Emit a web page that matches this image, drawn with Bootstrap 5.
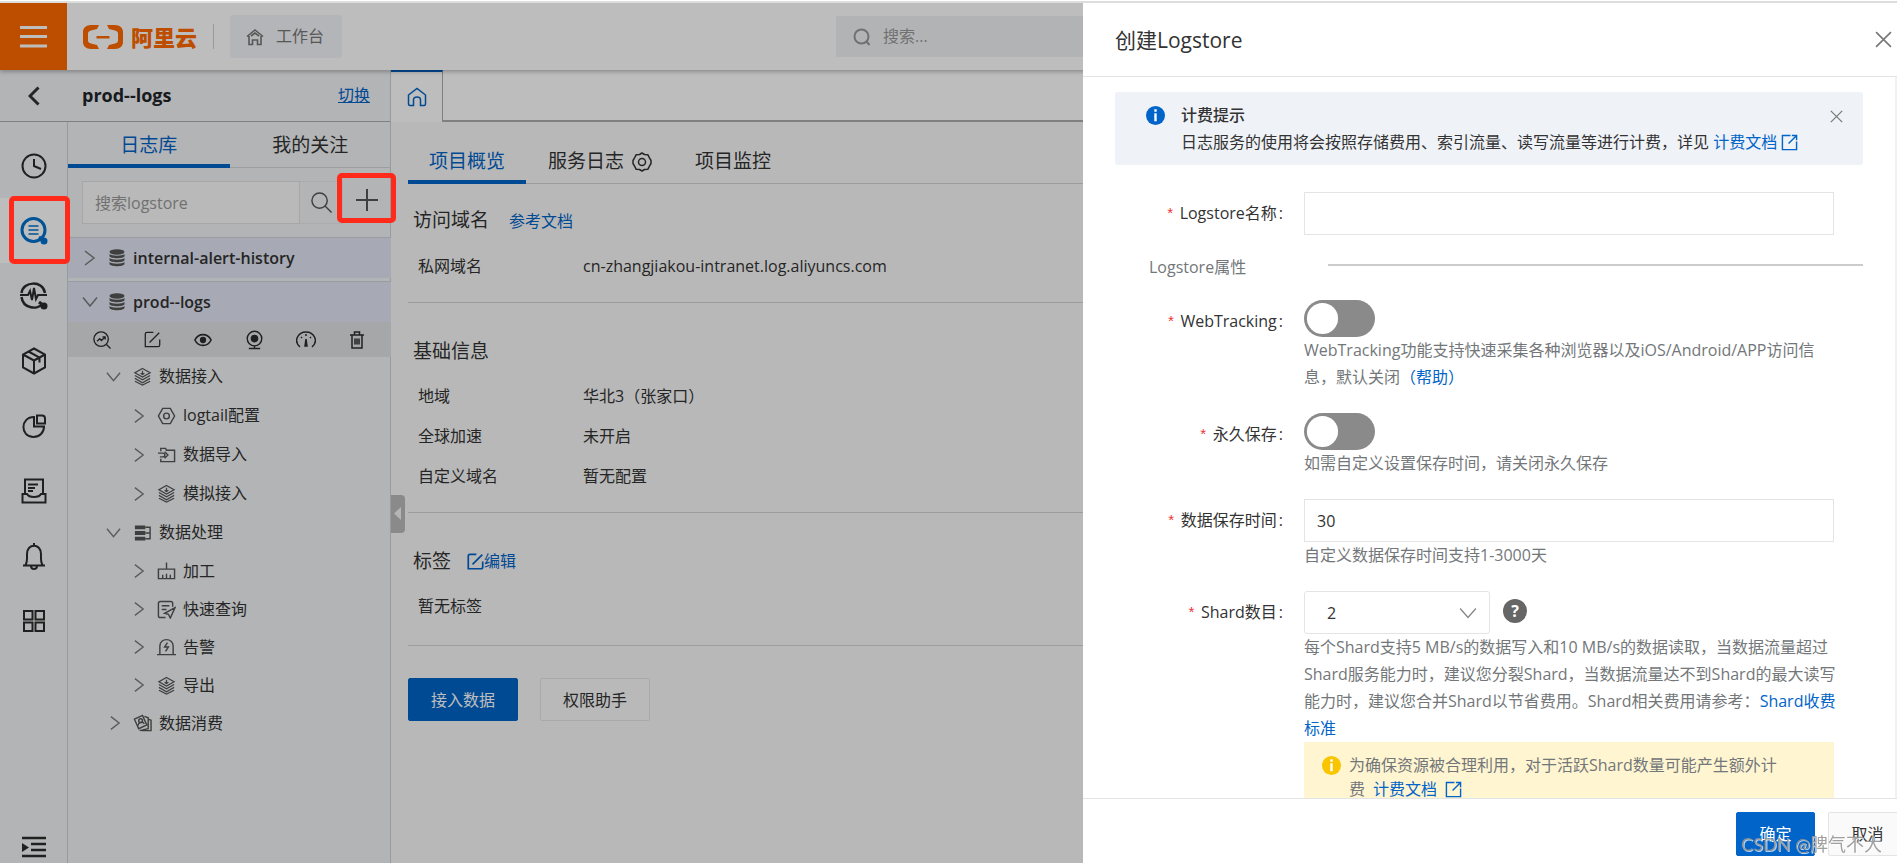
<!DOCTYPE html>
<html lang="zh-CN">
<head>
<meta charset="utf-8">
<meta name="viewport" content="width=device-width, initial-scale=1">
<title>日志服务 - 创建Logstore</title>
<link rel="stylesheet" href="https://cdn.jsdelivr.net/npm/bootstrap@5.3.0/dist/css/bootstrap.min.css">
<style>
:root{--brand:#0064c8;--ink:#333;--line:#d4d4d4}
body{font-family:"Open Sans","Noto Sans CJK SC",sans-serif;font-size:16px;line-height:27px;color:var(--ink);background:#f9f9f9}
a{color:var(--brand);text-decoration:none}
.ico{fill:none;stroke:currentColor;stroke-width:1.5;flex:none;display:block}
.btn-plain{border:0;background:none;padding:0;color:inherit;line-height:1}
.edge-strip{height:3px;background:linear-gradient(#fff 1px,#dcdedd 1px);position:relative;z-index:1080}
.t-19{font-size:19px}

/* top bar */
.topbar{height:67px;background:#fff;box-shadow:0 2px 4px rgba(0,0,0,.25);position:relative;z-index:2}
.menu-btn{width:67px;background:#ff6a00;color:#fff;border:0}
.brand-name{font-size:22px;font-weight:900;color:#ff6a00;line-height:24px}
.rule{width:1px;height:25px;background:#d0d0d0}
.bench-btn{height:43px;padding:0 18px 0 16px;background:#f2f4f8;border:0;border-radius:3px;color:#777}
.top-search{height:41px;background:#f0f2f5;color:#999;padding-left:17px;width:416px;gap:12px;margin-left:auto;margin-right:34%}
.top-search input,.tree-search input{border:0;background:none;outline:0;color:inherit;min-width:0}
.top-search input{padding:0}
.top-search input::placeholder,.tree-search input::placeholder{color:#999;opacity:1}

/* project header */
.project-bar{height:52px;background:#f2f3f5;border-bottom:1px solid #adadad}
.sidebar{width:391px;background:#f2f3f5;border-right:1px solid #ccd2d8}
.project-name{font-size:18px;font-weight:700;margin-left:42px}
.rail{width:68px;border-right:1px solid #ccd2d8;padding-top:11px;color:#2c2c2c}
.rail a{height:65px;color:inherit;position:relative}
.rail a.active{background:#fff;color:#0070cc}
.mark-box{position:absolute;border:5px solid #ff2a1a;border-radius:5px;z-index:1090;pointer-events:none}
.mark-rail{left:9px;right:-3px;top:-2px;bottom:-1px}
.mark-add{inset:-8px -5px 1px -6px}
.side-tabs{height:46px;border-bottom:1px solid #d4d6d9}
.side-tabs a{color:var(--ink);height:46px;padding-top:10px;border-bottom:4px solid transparent}
.side-tabs a.active,.main-tabs a.active{color:var(--brand);border-bottom-color:var(--brand);border-radius:3px 3px 0 0}
.tree-search{height:43px;margin:13px 0 13px 14px}
.tree-search .query{width:218px;background:#fafafa;border:1px solid #e2e2e2;padding:1px 0 0 10px}
.tree-search .go{width:43px;border:1px solid #e8e9eb;border-left:0;color:#555}
.tree-search .add{width:48px;color:#555;position:relative;padding-bottom:5px}
.store{height:41px;background:#e2e6f3;border-top:1px solid #d0d3da;font-weight:600;padding-left:16px}
.store svg:nth-child(2){margin:0 8px 0 13px}
.store+.store{margin-top:3px}
.store-tools{height:35px;background:#e1e2e5;padding:0 26px 0 25px;color:#2c2c2c}
.tree a{display:flex;align-items:center;height:39px;color:var(--ink);padding-left:38px}
.tree .sub{padding-left:62px}
.tree .tight{height:38px}
.tree a svg{color:#555}
.chev{stroke:#7b7b7b!important;margin-right:12px}
.tree .pic{margin-right:7px}

/* main area */
.home-tab{width:52px;height:52px;background:#fff;border-top:2px solid var(--brand);border-right:1px solid #adadad;color:var(--brand);margin-bottom:-2px}
.page-tabs{height:52px;background:#fff;border-bottom:2px solid #adadad}
.main-tabs{height:62px;border-bottom:1px solid var(--line)}
.main-tabs a{padding:26px 21px 0;height:62px;color:var(--ink);border-bottom:4px solid transparent}
.main-tabs a+a{margin-left:1px}
.main-pad{padding-left:17px}
.info{border-bottom:1px solid var(--line);padding:33px 0 16px}
.info:first-of-type{padding-top:21px}
.info:last-of-type{padding-bottom:19px}
.info h2{font-size:19px;font-weight:400;line-height:30px;margin:0 0 10px 5px}
.info dl{margin:0 0 0 10px;line-height:40px}
.info dt{width:165px;font-weight:400}
.info dd{margin:0}
.act{height:43px;padding:0 22px;font-size:16px;border-radius:2px}
.act-main{background:var(--brand);color:#fff;border:1px solid var(--brand)}
.act-alt{background:#fafafa;color:var(--ink);border:1px solid #e3e4e6}
.acts{gap:22px}
.fold{position:absolute;left:0;top:425px;width:14px;height:38px;background:#bbb;border-radius:0 4px 4px 0;color:#f4f4f4}

/* drawer */
.offcanvas-backdrop.show{opacity:1;background:rgba(0,0,0,.26)}
.offcanvas.drawer{top:3px;width:814px;border:0;transition:none;color:var(--ink);overflow:hidden}
.drawer-head{height:74px;border-bottom:1px solid #e3e4e6;padding:0 5px 0 32px}
.drawer-head h1{font-size:21px;font-weight:400;margin:2px 0 0}
.drawer .offcanvas-body{padding:15px 32px 0;overflow:hidden;border-right:2px solid #f1f1f1}
.notice{background:#eff2f7;border-radius:3px;height:73px;padding:10px 20px 0 31px;margin-bottom:27px}
.notice strong{font-weight:500}
.f-row{display:grid;grid-template-columns:168px 530px;column-gap:21px;margin-bottom:22px}
.f-row>label{text-align:right;height:43px;line-height:43px}
.f-row .req::before{content:"*";color:#e33;font-family:"Liberation Mono",monospace;font-size:15px;margin-right:5px}
.f-row .req::after{content:":";margin-left:2px}
.drawer .form-control,.drawer .form-select{height:43px;border:1px solid #e3e4e6;border-radius:0;font-size:16px;color:var(--ink);padding:0 12px}
.drawer .form-select{width:186px;border-radius:3px;padding-left:22px;background-size:18px 18px;background-image:url("data:image/svg+xml,%3Csvg xmlns='http://www.w3.org/2000/svg' viewBox='0 0 16 16'%3E%3Cpath fill='none' stroke='%23888' stroke-width='1.2' d='M1 4l7 8 7-8'/%3E%3C/svg%3E")}
.tip{color:#73777a}
.tip-wide{margin-right:-7px}
.form-switch.sw{padding:0;margin:0;min-height:37px}
.sw .form-check-input{width:71px;height:37px;margin:0;float:none;display:block;border:0;background-color:#8a8a8a;background-image:url("data:image/svg+xml,%3Csvg xmlns='http://www.w3.org/2000/svg' viewBox='-19 -19 38 38'%3E%3Ccircle r='16' fill='%23fff'/%3E%3C/svg%3E")!important}
.group-head{margin:-3px 0 19px 34px;color:#73777a;height:27px}
.group-head span{width:179px}
.group-head i{height:2px;background:#ccc;margin-bottom:5px}
.help-dot{width:24px;height:24px;border-radius:50%;background:#666;color:#fff;border:0;font-size:16px;font-weight:700;line-height:24px;padding:0;margin:0 0 4px 13px}
.warn{background:#fff5d1;padding:11px 48px 11px 18px;line-height:24px}
.drawer-foot{height:65px;border-top:1px solid #e3e4e6;background:#fff;padding-top:13px;gap:13px}
.drawer-foot .act{height:44px;width:79px;flex:none}
.drawer-foot .act:last-child{margin-right:-10px}
.stamp{position:fixed;right:15px;bottom:6px;font-size:18px;line-height:26px;font-family:Lato,"Noto Sans CJK SC",sans-serif;color:rgba(150,150,150,.9);text-shadow:1px 1px 0 rgba(255,255,255,.7);z-index:1095;pointer-events:none}
</style>
</head>
<body class="vh-100 overflow-hidden d-flex flex-column">
<svg width="0" height="0" class="position-absolute" aria-hidden="true">
  <symbol id="i-right" viewBox="0 0 12 16"><path d="M1 1l9 7-9 7"/></symbol>
  <symbol id="i-down" viewBox="0 0 16 12"><path d="M1 1.500l7 8.500 7-8.500"/></symbol>
  <symbol id="i-search" viewBox="0 0 24 24"><circle cx="10" cy="10" r="8"/><path d="M16 16l6.500 6.500"/></symbol>
  <symbol id="i-x" viewBox="0 0 16 16"><path d="M1 1l14 14M15 1L1 15"/></symbol>
  <symbol id="i-layers" viewBox="0 0 20 20"><path d="M10 1.500l8 4.500-8 4.500L2 6zM2 9l8 4.500L18 9M2 12l8 4.500 8-4.500M2 15l8 4 8-4M10 4v4M8 6.500l2 1.500 2-1.500" stroke-width="1.300"/></symbol>
  <symbol id="i-db" viewBox="0 0 16 18"><g fill="currentColor" stroke="none"><ellipse cx="8" cy="3" rx="7.500" ry="2.700"/><path d="M.5 5c2 2.300 13 2.300 15 0v2.300c-1 2.600-14 2.600-15 0zM.5 9c2 2.300 13 2.300 15 0v2.300c-1 2.600-14 2.600-15 0zM.5 13c2 2.300 13 2.300 15 0v2c-1 3-14 3-15 0z"/></g></symbol>
  <symbol id="i-edit" viewBox="0 0 20 20"><path d="M11 1.500H3.500c-1.300 0-2 .7-2 2v15h15c1.300 0 2-.7 2-2V10M6.500 13.500L18 2"/></symbol>
  <symbol id="i-out" viewBox="0 0 18 18"><path d="M10 1.500H1.500v15h15V8M8 10l8-8M11.500 1.500h5v5"/></symbol>
  <symbol id="i-info" viewBox="0 0 20 20"><circle cx="10" cy="10" r="10" fill="currentColor" stroke="none"/><path d="M10 3.500v2.500M10 7.500V16" stroke="#fff" stroke-width="2.500"/></symbol>
</svg>

<div class="edge-strip"></div>

<header class="topbar d-flex align-items-center flex-shrink-0">
  <button class="menu-btn h-100 d-flex align-items-center justify-content-center" aria-label="菜单">
    <svg class="ico" width="27" height="22" style="stroke-width:3"><path d="M0 1.500h27M0 10.500h27M0 20h27"/></svg>
  </button>
  <a href="#" class="d-flex align-items-center ms-3" aria-label="阿里云">
    <svg class="ico" width="40" height="26" viewBox="0 0 40 26" style="color:#ff6a00"><path d="M16 1H8C3 1 0 4 0 8v10c0 4 3 7 8 7h8l-2-4-6-1.500c-2-.5-3-1.500-3-3v-7c0-1.500 1-2.500 3-3L14 5zM24 1h8c5 0 8 3 8 7v10c0 4-3 7-8 7h-8l2-4 6-1.500c2-.5 3-1.500 3-3v-7c0-1.500-1-2.500-3-3L26 5zM13.500 12h13v2.500h-13z" fill="currentColor" stroke="none"/></svg>
    <span class="brand-name ms-2">阿里云</span>
  </a>
  <span class="rule ms-3 me-3"></span>
  <button class="bench-btn d-flex align-items-center gap-2">
    <svg class="ico" width="18" height="18" viewBox="0 0 18 18"><path d="M1 8.500L9 2l8 6.500M3 8v8.500h3.500V12h5v4.500H15V8M5 8l4-3 4 3" stroke-width="1.600"/></svg><span class="ps-1">工作台</span>
  </button>
  <label class="top-search d-flex align-items-center">
    <svg class="ico" width="18" height="18" viewBox="0 0 18 18" style="stroke-width:2"><circle cx="8.500" cy="8.500" r="7"/><path d="M13 13l3.500 4"/></svg>
    <input type="search" placeholder="搜索..." aria-label="搜索">
  </label>
</header>

<div class="d-flex flex-grow-1" style="min-height:0">
  <aside class="sidebar d-flex flex-column flex-shrink-0">
    <div class="project-bar d-flex align-items-center flex-shrink-0">
      <button class="btn-plain ms-4" aria-label="返回"><svg class="ico ms-1" width="12" height="20" style="stroke-width:3"><path d="M10.500 1.500L2 10l8.500 8.500"/></svg></button>
      <span class="project-name text-dark">prod--logs</span>
      <a href="#" class="text-decoration-underline ms-auto me-3 pe-1">切换</a>
    </div>
    <div class="d-flex flex-grow-1">
      <nav class="rail d-flex flex-column flex-shrink-0">
        <a href="#" class="d-flex align-items-center justify-content-center" aria-label="最近"><svg class="ico" width="26" height="26" style="stroke-width:2"><circle cx="13" cy="13" r="11.500"/><path d="M13 6v7l7 3"/></svg></a>
        <a href="#" class="active d-flex align-items-center justify-content-center" aria-label="日志存储"><svg class="ico" width="28" height="28" style="stroke-width:3"><circle cx="13.500" cy="13" r="11.500"/><path d="M8.500 9h10M8.500 13h10M8.500 17h10" stroke-width="1.500"/><path d="M19 20l5 4"/><circle cx="24" cy="24" r="3.500" fill="currentColor" stroke="none"/></svg><span class="mark-box mark-rail"></span></a>
        <a href="#" class="d-flex align-items-center justify-content-center" aria-label="时序存储"><svg class="ico" width="28" height="28" style="stroke-width:2"><path d="M1.500 11C3-1 23-2 25 11M1.500 15C3 27 18 28 22 22" stroke-width="2.500"/><path d="M0 13h8l2-4 2 9 2-12 2 11 2-4h9"/><path d="M19 20l5 4" stroke-width="3"/><circle cx="24" cy="24" r="3.500" fill="currentColor" stroke="none"/></svg></a>
        <a href="#" class="d-flex align-items-center justify-content-center" aria-label="资源"><svg class="ico" width="26" height="28" style="stroke-width:2"><path d="M13 1.500L24 7.500v13l-11 6-11-6v-13zM2 7.500l11 6 11-6M13 13.500v13M7.500 4.500l11 6v5"/></svg></a>
        <a href="#" class="d-flex align-items-center justify-content-center" aria-label="仪表盘"><svg class="ico" width="24" height="24" style="stroke-width:2"><path d="M12 3C-2 3-2 23 11.500 23c6 0 10.500-4.500 10.500-10.500H12zM15 1.500h5c2 0 3 1 3 3v5h-8z"/></svg></a>
        <a href="#" class="d-flex align-items-center justify-content-center" aria-label="任务"><svg class="ico" width="26" height="26" style="stroke-width:2"><path d="M4 16V1.500h18V16M1.500 16v8.500h23V16H20c-2 4-12 4-14 0zM7 6.500h10M7 10h7M7 13h5"/></svg></a>
        <a href="#" class="d-flex align-items-center justify-content-center" aria-label="告警"><svg class="ico" width="24" height="28" style="stroke-width:2"><path d="M1 23.500h22M3.500 23c2-3 1.500-7 1.500-11C5 1 19 1 19 12c0 4-.5 8 1.500 11M9 24c0 4 6 4 6 0M12 4V1"/></svg></a>
        <a href="#" class="d-flex align-items-center justify-content-center" aria-label="应用"><svg class="ico" width="24" height="24" style="stroke-width:2"><path d="M2 2h8.500v8.500H2zM13.500 2H22v8.500h-8.500zM2 13.500h8.500V22H2zM13.500 13.500H22V22h-8.500z"/></svg></a>
        <button class="btn-plain mt-auto mb-1 d-flex justify-content-center" aria-label="展开"><svg class="ico" width="24" height="24" style="stroke-width:2.500"><path d="M0 3h24M9 9h15M9 15h15M0 21h24"/><path d="M0 8l7 4.500L0 17z" fill="currentColor" stroke="none"/></svg></button>
      </nav>
      <div class="flex-grow-1 d-flex flex-column">
        <nav class="side-tabs d-flex t-19 text-center">
          <a href="#" class="active w-50">日志库</a>
          <a href="#" class="w-50">我的关注</a>
        </nav>
        <div class="tree-search d-flex">
          <label class="query d-flex"><input type="text" class="w-100" placeholder="搜索logstore" aria-label="搜索logstore"></label>
          <button class="btn-plain go d-flex align-items-center justify-content-center" aria-label="查询"><svg class="ico" width="23" height="23"><use href="#i-search"/></svg></button>
          <button class="btn-plain add d-flex align-items-center justify-content-center" aria-label="新建"><svg class="ico" width="22" height="22" style="stroke-width:2"><path d="M11 0v22M0 11h22"/></svg><span class="mark-box mark-add"></span></button>
        </div>
        <div class="store d-flex align-items-center"><svg class="ico" width="12" height="16" style="color:#7b7b7b"><use href="#i-right"/></svg><svg class="ico" width="16" height="18" style="color:#555"><use href="#i-db"/></svg>internal-alert-history</div>
        <div class="store d-flex align-items-center"><svg class="ico" width="12" height="12" viewBox="2 0 12 12" overflow="visible" style="color:#7b7b7b"><path d="M1 1.500l7 8.500 7-8.500"/></svg><svg class="ico" width="16" height="18" style="color:#555"><use href="#i-db"/></svg>prod--logs</div>
        <div class="store-tools d-flex align-items-center justify-content-between">
          <button class="btn-plain" aria-label="查询分析"><svg class="ico" width="18" height="18" viewBox="0 0 20 20"><circle cx="9" cy="9" r="8"/><path d="M15 15l4.500 4.500M4.500 11.500l3-3 2 2 4-4M10.500 6.500h3v3"/></svg></button>
          <button class="btn-plain" aria-label="修改"><svg class="ico" width="17" height="17" viewBox="0 0 20 20"><use href="#i-edit"/></svg></button>
          <button class="btn-plain" aria-label="预览"><svg class="ico" width="18" height="14" viewBox="0 0 20 14"><path d="M1 7c4-8 14-8 18 0-4 8-14 8-18 0z" stroke-width="1.800"/><circle cx="10" cy="7" r="3.500" fill="currentColor" stroke="none"/></svg></button>
          <button class="btn-plain" aria-label="监控"><svg class="ico" width="17" height="20" viewBox="0 0 18 20"><circle cx="9" cy="8.500" r="7.700"/><circle cx="9" cy="8.500" r="3.300" fill="currentColor"/><path d="M9 16v3M3 19h12"/></svg></button>
          <button class="btn-plain" aria-label="用量"><svg class="ico" width="20" height="18" viewBox="0 0 20 18"><path d="M4 16C-3 10 2 1 10 1s13 9 6 15M10 3v2M5 6l1 1M15 6l-1 1"/><path d="M10 8l1 7H9z" fill="currentColor"/></svg></button>
          <button class="btn-plain" aria-label="删除"><svg class="ico" width="16" height="18" viewBox="0 0 16 18"><path d="M1 4h14M3 4v13h10V4M5.500 4V1h5v3M6 7.500v6M8 7.500v6M10 7.500v6"/></svg></button>
        </div>
        <nav class="tree">
          <a href="#"><svg class="ico chev" width="15" height="12"><use href="#i-down"/></svg><svg class="ico pic" width="19" height="19"><use href="#i-layers"/></svg>数据接入</a>
          <a href="#" class="sub"><svg class="ico chev ms-1" width="11" height="16"><use href="#i-right"/></svg><svg class="ico pic" width="19" height="18" viewBox="0 0 20 18"><path d="M6 1h8l4.500 8-4.500 8H6L1.500 9z"/><circle cx="10" cy="9" r="3"/></svg>logtail配置</a>
          <a href="#" class="sub"><svg class="ico chev ms-1" width="11" height="16"><use href="#i-right"/></svg><svg class="ico pic" width="19" height="16" viewBox="0 0 20 16"><path d="M4 4V1h5l1 2h8.500v12H4v-3M1 6h5c3 0 3 4 0 4H3M8 4.500L11.500 8 8 11.500"/></svg>数据导入</a>
          <a href="#" class="sub"><svg class="ico chev ms-1" width="11" height="16"><use href="#i-right"/></svg><svg class="ico pic" width="19" height="19"><use href="#i-layers"/></svg>模拟接入</a>
          <a href="#"><svg class="ico chev" width="15" height="12"><use href="#i-down"/></svg><svg class="ico pic" width="19" height="18" viewBox="0 0 20 18"><path d="M2 3h11M2 9h11M2 15h11" stroke-width="4"/><path d="M13 3h5v12h-5M13 9h5"/></svg>数据处理</a>
          <a href="#" class="sub tight"><svg class="ico chev ms-1" width="11" height="16"><use href="#i-right"/></svg><svg class="ico pic" width="19" height="18" viewBox="0 0 20 18"><path d="M1.500 7h17v10h-17zM10 0v7M6 13v4M10 12v5M14 13v4"/></svg>加工</a>
          <a href="#" class="sub tight"><svg class="ico chev ms-1" width="11" height="16"><use href="#i-right"/></svg><svg class="ico pic" width="19" height="19" viewBox="0 0 20 20"><path d="M9 18.500H3.500c-1.500 0-2-.5-2-2v-13c0-1.500.5-2 2-2h11c1.500 0 2 .5 2 2V7M5 6h8M5 10h5M19 8L8 14l4 1 2 4z"/></svg>快速查询</a>
          <a href="#" class="sub tight"><svg class="ico chev ms-1" width="11" height="16"><use href="#i-right"/></svg><svg class="ico pic" width="19" height="18" viewBox="0 0 20 18"><path d="M0 17h20M3 17V8c0-9 14-9 14 0v9M11 4.500L8 9h4l-3 4.500"/></svg>告警</a>
          <a href="#" class="sub tight"><svg class="ico chev ms-1" width="11" height="16"><use href="#i-right"/></svg><svg class="ico pic" width="19" height="19"><use href="#i-layers"/></svg>导出</a>
          <a href="#" class="tight"><svg class="ico chev ms-1" width="11" height="16"><use href="#i-right"/></svg><svg class="ico pic" width="19" height="18" viewBox="0 0 20 18"><path d="M1.500 5L10 1l4.500 10-8.500 4zM12 2l4 1.500V15L7 17M16 5l3 1v11H9"/><circle cx="8" cy="6.500" r="2"/><path d="M5 12c1-4 5-5 7-2"/></svg>数据消费</a>
        </nav>
      </div>
    </div>
  </aside>

  <main class="flex-grow-1 position-relative">
    <div class="page-tabs">
      <a href="#" class="home-tab d-flex align-items-center justify-content-center" aria-label="首页"><svg class="ico" width="20" height="20" viewBox="0 0 20 20"><path d="M1.500 8L10 1.500 18.500 8v9c0 1-.5 1.500-1.500 1.500h-3.500V13c0-4-7-4-7 0v5.500H3c-1 0-1.500-.5-1.500-1.500z"/></svg></a>
    </div>
    <button class="btn-plain fold" aria-label="收起"><svg class="ico" width="12" height="14"><path d="M10 0v13L3 6.500z" fill="currentColor" stroke="none"/></svg></button>
    <div class="main-pad">
      <nav class="main-tabs d-flex t-19">
        <a href="#" class="active">项目概览</a>
        <a href="#" class="d-flex">服务日志<svg class="ico mt-1 ms-2" width="20" height="20" viewBox="0 0 20 20"><path d="M7.500 2.500L10 1l2.500 1.500 3.300.2 1.500 3L19 8.500v3l-1.700 2.800-1.500 3-3.300.2L10 19l-2.500-1.500-3.300-.2-1.500-3L1 11.500v-3l1.700-2.800 1.500-3z" stroke-linejoin="round"/><circle cx="10" cy="10" r="3.500"/></svg></a>
        <a href="#">项目监控</a>
      </nav>
      <section class="info">
        <h2>访问域名<a href="#" class="fs-6 ms-3 ps-1">参考文档</a></h2>
        <dl class="d-flex"><dt>私网域名</dt><dd>cn-zhangjiakou-intranet.log.aliyuncs.com</dd></dl>
      </section>
      <section class="info">
        <h2>基础信息</h2>
        <dl class="d-flex"><dt>地域</dt><dd>华北3（张家口）</dd></dl>
        <dl class="d-flex"><dt>全球加速</dt><dd>未开启</dd></dl>
        <dl class="d-flex"><dt>自定义域名</dt><dd>暂无配置</dd></dl>
      </section>
      <section class="info">
        <h2 class="d-flex align-items-center">标签<a href="#" class="fs-6 ms-3 d-flex align-items-center"><svg class="ico" width="17" height="17" viewBox="0 0 20 20" style="stroke-width:2"><use href="#i-edit"/></svg>编辑</a></h2>
        <dl><dd>暂无标签</dd></dl>
      </section>
      <div class="acts d-flex mt-4 pt-2">
        <button class="btn act act-main">接入数据</button>
        <button class="btn act act-alt">权限助手</button>
      </div>
    </div>
  </main>
</div>

<div class="offcanvas-backdrop show"></div>
<div class="offcanvas offcanvas-end show drawer" data-bs-backdrop="false" data-bs-scroll="true" tabindex="-1" role="dialog" aria-labelledby="drawer-title">
  <div class="drawer-head d-flex align-items-center justify-content-between flex-shrink-0">
    <h1 id="drawer-title">创建Logstore</h1>
    <button class="btn-plain" aria-label="关闭"><svg class="ico" width="17" height="17" style="color:#777"><use href="#i-x"/></svg></button>
  </div>
  <div class="offcanvas-body">
    <div class="notice d-flex">
      <svg class="ico mt-1" width="19" height="19" style="color:var(--brand)"><use href="#i-info"/></svg>
      <div class="ps-2 ms-2 flex-grow-1"><strong>计费提示</strong><br>日志服务的使用将会按照存储费用、索引流量、读写流量等进行计费，详见 <a href="#" class="d-inline-flex align-items-center gap-1 align-top">计费文档<svg class="ico" width="17" height="17"><use href="#i-out"/></svg></a></div>
      <button class="btn-plain align-self-start mt-2" aria-label="关闭提示"><svg class="ico" width="13" height="13" viewBox="0 0 16 16" style="color:#777"><use href="#i-x"/></svg></button>
    </div>
    <form>
      <div class="f-row">
        <label class="req" for="f-name">Logstore名称</label>
        <input class="form-control" id="f-name" type="text">
      </div>
      <div class="group-head d-flex align-items-center"><span>Logstore属性</span><i class="flex-grow-1"></i></div>
      <div class="f-row">
        <label class="req" for="f-web">WebTracking</label>
        <div>
          <div class="form-check form-switch sw"><input class="form-check-input" type="checkbox" role="switch" id="f-web"></div>
          <div class="tip">WebTracking功能支持快速采集各种浏览器以及iOS/Android/APP访问信息，默认关闭<a href="#">（帮助）</a></div>
        </div>
      </div>
      <div class="f-row">
        <label class="req" for="f-keep">永久保存</label>
        <div>
          <div class="form-check form-switch sw"><input class="form-check-input" type="checkbox" role="switch" id="f-keep"></div>
          <div class="tip">如需自定义设置保存时间，请关闭永久保存</div>
        </div>
      </div>
      <div class="f-row">
        <label class="req" for="f-days">数据保存时间</label>
        <div>
          <input class="form-control" id="f-days" type="text" value="30">
          <div class="tip">自定义数据保存时间支持1-3000天</div>
        </div>
      </div>
      <div class="f-row">
        <label class="req" for="f-shard">Shard数目</label>
        <div>
          <div class="d-flex align-items-center">
            <select class="form-select" id="f-shard"><option>2</option></select>
            <button type="button" class="help-dot" aria-label="帮助">?</button>
          </div>
          <div class="tip tip-wide">每个Shard支持5 MB/s的数据写入和10 MB/s的数据读取，当数据流量超过Shard服务能力时，建议您分裂Shard，当数据流量达不到Shard的最大读写能力时，建议您合并Shard以节省费用。Shard相关费用请参考：<a href="#">Shard收费标准</a></div>
          <div class="warn tip d-flex">
            <svg class="ico me-2" width="19" height="19" style="color:#f9c400;margin-top:3px"><use href="#i-info"/></svg>
            <div>为确保资源被合理利用，对于活跃Shard数量可能产生额外计费<a href="#" class="d-inline-flex align-items-center gap-2 align-top ms-2">计费文档<svg class="ico" width="17" height="17"><use href="#i-out"/></svg></a></div>
          </div>
        </div>
      </div>
    </form>
  </div>
  <div class="drawer-foot d-flex justify-content-end flex-shrink-0">
    <button class="btn act act-main">确定</button>
    <button class="btn act act-alt">取消</button>
  </div>
</div>
<div class="stamp">CSDN @脾气不大</div>
<script src="https://cdn.jsdelivr.net/npm/bootstrap@5.3.0/dist/js/bootstrap.bundle.min.js"></script>
</body>
</html>
